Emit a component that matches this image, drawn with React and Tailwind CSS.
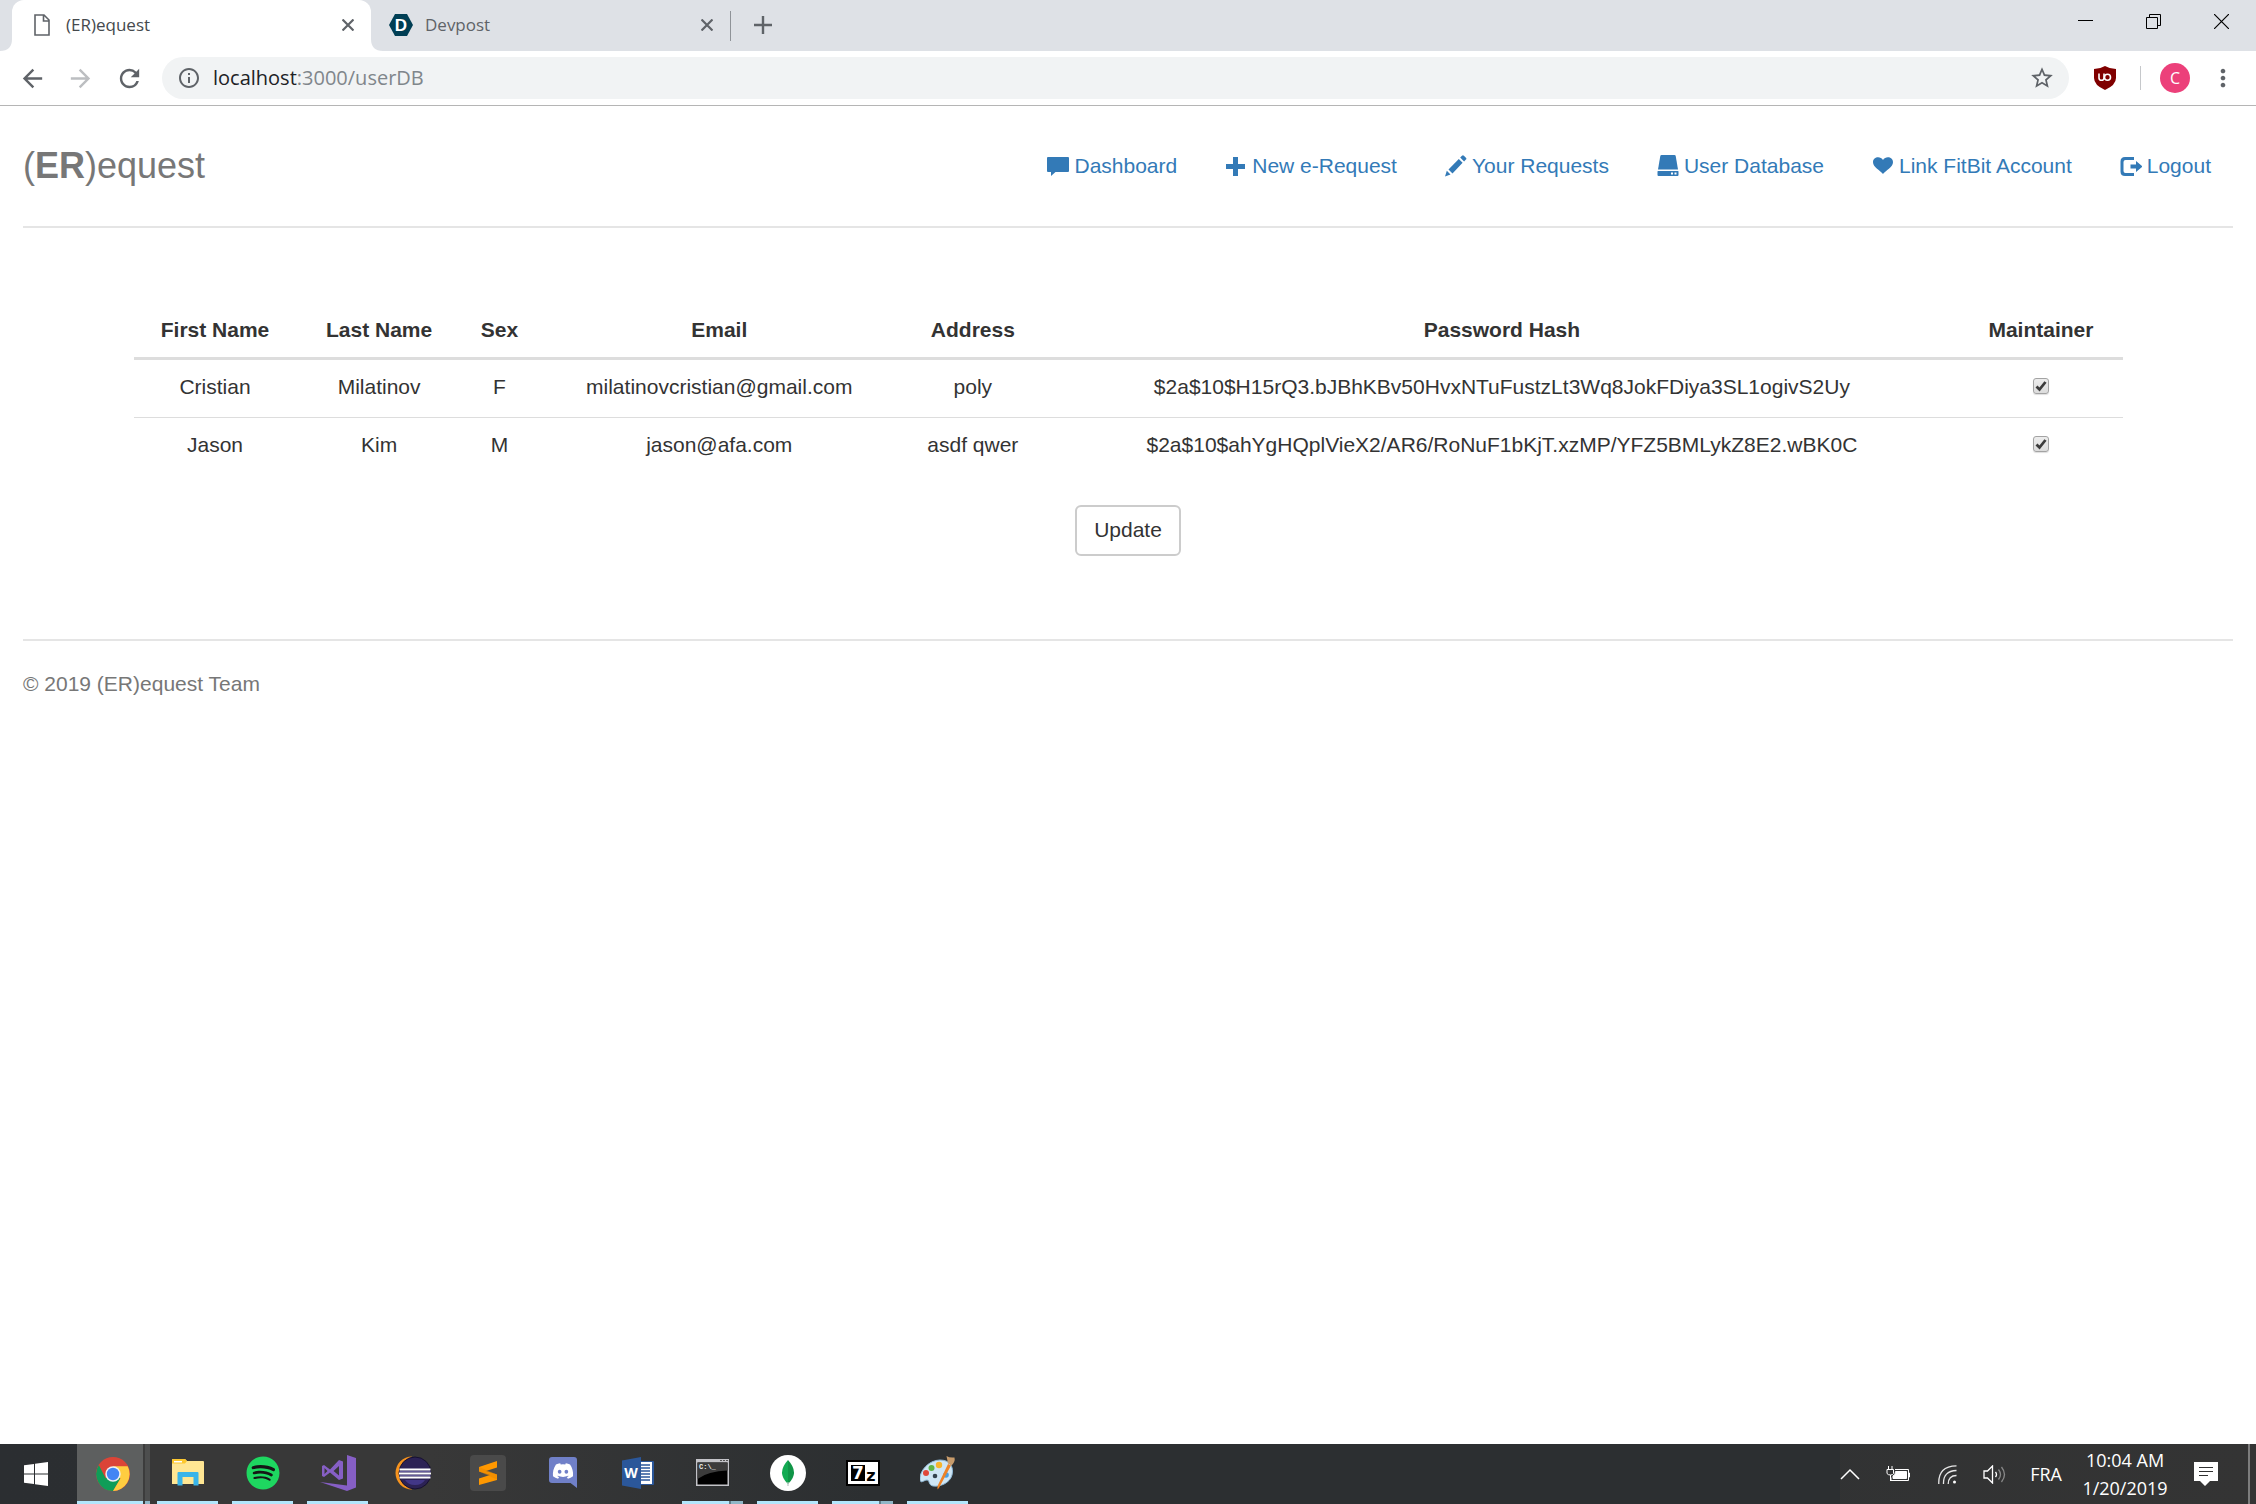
import { useState } from 'react';
import { FaDiscord, FaSpotify } from 'react-icons/fa';
import { MdArrowBack, MdArrowForward, MdInfoOutline, MdMoreVert, MdRefresh, MdStarBorder } from 'react-icons/md';

const navLinks = [
  { label: 'Dashboard', href: '#dashboard', Icon: CommentIcon },
  { label: 'New e-Request', href: '#new', Icon: PlusIcon },
  { label: 'Your Requests', href: '#requests', Icon: PencilIcon },
  { label: 'User Database', href: '#userDB', Icon: DriveIcon },
  { label: 'Link FitBit Account', href: '#fitbit', Icon: HeartIcon },
  { label: 'Logout', href: '#logout', Icon: LogoutIcon },
];

const columns = [
  { name: 'First Name', width: 'w-[8.2%]' },
  { name: 'Last Name', width: 'w-[8.3%]' },
  { name: 'Sex', width: 'w-[3.8%]' },
  { name: 'Email', width: 'w-[18.3%]' },
  { name: 'Address', width: 'w-[7.2%]' },
  { name: 'Password Hash', width: 'w-[46%]' },
  { name: 'Maintainer', width: 'w-[8.2%]' },
];

const initialUsers = [
  {
    first: 'Cristian',
    last: 'Milatinov',
    sex: 'F',
    email: 'milatinovcristian@gmail.com',
    address: 'poly',
    hash: '$2a$10$H15rQ3.bJBhKBv50HvxNTuFustzLt3Wq8JokFDiya3SL1ogivS2Uy',
    maintainer: true,
  },
  {
    first: 'Jason',
    last: 'Kim',
    sex: 'M',
    email: 'jason@afa.com',
    address: 'asdf qwer',
    hash: '$2a$10$ahYgHQplVieX2/AR6/RoNuF1bKjT.xzMP/YFZ5BMLykZ8E2.wBK0C',
    maintainer: true,
  },
];

function CommentIcon() {
  return (
    <svg viewBox="0 0 22 22" className="size-[22px]" fill="currentColor">
      <path d="M1 2h20a1 1 0 0 1 1 1v13a1 1 0 0 1-1 1H8.500L4 21V17H1a1 1 0 0 1-1-1V3a1 1 0 0 1 1-1z" />
    </svg>
  );
}

function PlusIcon() {
  return (
    <svg viewBox="0 0 22 22" className="size-[22px]" fill="currentColor">
      <path d="M8 2h5v7h7v5h-7v7H8v-7H1V9h7z" />
    </svg>
  );
}

function PencilIcon() {
  return (
    <svg viewBox="0 0 22 22" className="size-[22px]" fill="currentColor">
      <path d="M0 21.500l1.800-5.700 3.700 3.700zM3.500 14.500L13.800 4l3.800 3.800L7.500 18.500zM15.200 2.500L17 .7a1.300 1.300 0 0 1 1.900 0l2 2a1.300 1.300 0 0 1 0 1.900L19.100 6.500z" />
    </svg>
  );
}

function DriveIcon() {
  return (
    <svg viewBox="0 0 22 22" className="size-[22px]" fill="currentColor">
      <path d="M4.500 0h13q1 0 1.200 1L21 14.500H1L3.300 1Q3.500 0 4.500 0z" />
      <path fillRule="evenodd" d="M1 16h20q.5 0 .5.500v3.500q0 1-1 1h-19q-1 0-1-1v-3.500q0-.5.500-.5zM14 17.500v2h2v-2zM17.500 17.500v2h2v-2z" />
    </svg>
  );
}

function HeartIcon() {
  return (
    <svg viewBox="0 0 22 22" className="size-[22px]" fill="currentColor">
      <path d="M11 19C8.500 15.500 1 12 1 7.200 1 1.500 8.500.5 11 5 13.500.5 21 1.500 21 7.200c0 4.800-7.500 8.300-10 11.800z" />
    </svg>
  );
}

function LogoutIcon() {
  return (
    <svg viewBox="0 0 22 22" className="size-[22px]" fill="currentColor">
      <path d="M14 2v3H5.500Q3.500 5 3.500 7v9q0 2 2 2H14v3H5Q.5 21 .5 16.500v-10Q.5 2 5 2z" />
      <path d="M16 6l6.500 5.500L16 17v-3.500h-5.500v-4H16z" />
    </svg>
  );
}

function FileIcon() {
  return (
    <svg viewBox="0 0 16 22" className="h-[22px] w-4" fill="none" stroke="#5f6368" strokeWidth="1.600">
      <path d="M1 1h9l5 5v15H1zM9.500 1.500v5.500H15" />
    </svg>
  );
}

function DevpostIcon() {
  return (
    <svg viewBox="0 0 24 22" className="h-[22px] w-6">
      <path d="M6 0h12l6 11-6 11H6L0 11z" fill="#003e54" />
      <text x="12" y="17" textAnchor="middle" fontSize="17" fontWeight="700" fill="#fff" fontFamily="Liberation Sans, sans-serif">D</text>
    </svg>
  );
}

function ShieldIcon() {
  return (
    <svg viewBox="0 0 22 24" className="h-6 w-[22px]">
      <path d="M11 0q5 3 11 3v9q0 7-11 12Q0 19 0 12V3q6 0 11-3z" fill="#800000" />
      <path d="M5 7.500V12q0 2.300 2.500 2.300T10 12V7.500" fill="none" stroke="#fff" strokeWidth="1.600" />
      <circle cx="13.500" cy="11.300" r="3" fill="none" stroke="#fff" strokeWidth="1.600" />
    </svg>
  );
}

function BrowserTab({ title, icon, active }) {
  return (
    <div className={active ? 'relative flex h-full w-[359px] items-center rounded-t-xl bg-white pr-[11px] pb-px pl-[18px]' : 'flex h-full w-[359px] items-center pr-[11px] pb-px pl-[18px]'}>
      {active && (
        <>
          <svg viewBox="0 0 12 12" className="absolute bottom-0 -left-3 size-3" fill="#fff"><path d="M12 0v12H0Q12 12 12 0z" /></svg>
          <svg viewBox="0 0 12 12" className="absolute -right-3 bottom-0 size-3" fill="#fff"><path d="M0 0v12h12Q0 12 0 0z" /></svg>
        </>
      )}
      <span className="flex w-6 justify-center">{icon}</span>
      <span className={active ? 'ml-3 flex-1 text-[17px] text-[#45494d]' : 'ml-3 flex-1 text-[17px] text-[#5f6368]'}>{title}</span>
      <button aria-label={`Close ${title}`} className="flex size-6 items-center justify-center text-[#5f6368]">
        <svg viewBox="0 0 12 12" className="size-3" stroke="currentColor" strokeWidth="2.200"><path d="M.5.500l11 11M11.500.500l-11 11" /></svg>
      </button>
    </div>
  );
}

function Browser() {
  return (
    <header className="font-['Open_Sans','Noto_Sans',sans-serif]">
      <div className="flex h-[51px] items-center bg-[#dee1e6] pl-3">
        <BrowserTab title="(ER)equest" icon={<FileIcon />} active />
        <BrowserTab title="Devpost" icon={<DevpostIcon />} />
        <span className="h-[30px] w-px bg-[#8f9398]" />
        <button aria-label="New tab" className="ml-4 flex size-8 items-center justify-center pb-px text-[#5f6368]">
          <svg viewBox="0 0 18 18" className="size-[18px]" stroke="currentColor" strokeWidth="2.400"><path d="M0 9h18M9 0v18" /></svg>
        </button>
        <div className="ml-auto flex h-[42px] self-start pr-px text-black">
          <button aria-label="Minimize" className="flex w-[68px] items-center justify-center">
            <svg viewBox="0 0 15 15" className="size-[15px]"><path d="M0 6.500h15" stroke="currentColor" /></svg>
          </button>
          <button aria-label="Restore" className="flex w-[68px] items-center justify-center">
            <svg viewBox="0 0 15 15" className="size-[15px]" fill="none" stroke="currentColor"><path d="M.5 3.500h11v11H.5zM3.500 3.500v-3h11v11h-3" /></svg>
          </button>
          <button aria-label="Close window" className="flex w-[68px] items-center justify-center">
            <svg viewBox="0 0 15 15" className="size-[15px]" stroke="currentColor" strokeWidth="1.200"><path d="M0 0l15 15M15 0L0 15" /></svg>
          </button>
        </div>
      </div>

      <div className="flex h-[55px] items-center border-b border-[#b5b5b5] pr-[19px] pl-[17px] text-[#5f6368]">
        <button aria-label="Back" className="flex w-[30px] justify-center"><MdArrowBack className="size-[29px]" /></button>
        <button aria-label="Forward" className="ml-[18px] flex w-[30px] justify-center text-[#bcbec1]"><MdArrowForward className="size-[29px]" /></button>
        <button aria-label="Reload" className="ml-[19px] flex w-[30px] justify-center"><MdRefresh className="size-[29px]" /></button>
        <div className="ml-[18px] flex h-[42px] flex-1 items-center rounded-full bg-[#f1f3f4] pr-[14px] pl-[15px]">
          <MdInfoOutline className="size-6" />
          <div className="ml-3 flex-1 text-[20px] text-[#80868b]"><span className="text-[#202124]">localhost</span>:3000/userDB</div>
          <button aria-label="Bookmark this page"><MdStarBorder className="size-[26px]" /></button>
        </div>
        <button aria-label="uBlock Origin" className="ml-[25px]"><ShieldIcon /></button>
        <span className="ml-6 h-6 w-px bg-[#c6c8cb]" />
        <button aria-label="Profile" className="ml-[19px] flex size-[30px] items-center justify-center rounded-full bg-[#ec407a] text-base text-white">C</button>
        <button aria-label="Menu" className="ml-[19px]"><MdMoreVert className="size-7" /></button>
      </div>
    </header>
  );
}

function Checkbox({ label, checked, onChange }) {
  return (
    <label className="relative mx-auto mt-[6px] flex size-4">
      <input
        type="checkbox"
        aria-label={label}
        checked={checked}
        onChange={onChange}
        className="peer size-4 appearance-none rounded-[3px] border border-[#a3a3a3] bg-linear-to-b from-[#ededed] to-[#dcdcdc] shadow-[0_1px_1px_#00000022]"
      />
      <svg viewBox="0 0 16 16" className="pointer-events-none absolute inset-0 hidden peer-checked:block" fill="none" stroke="#3c3c3c" strokeWidth="2.800">
        <path d="M3.500 8.500l3 3L12.500 4" />
      </svg>
    </label>
  );
}

function UserTable() {
  const [users, setUsers] = useState(initialUsers);

  const toggle = (email) => {
    setUsers(users.map((u) => (u.email === email ? { ...u, maintainer: !u.maintainer } : u)));
  };

  return (
    <form className="mt-[75px] flex flex-col items-center" onSubmit={(e) => e.preventDefault()}>
      <table className="w-[90%] table-fixed border-separate border-spacing-0 text-center text-[21px] leading-[30px] text-[#333]">
        <thead>
          <tr>
            {columns.map((c) => <th key={c.name} className={`${c.width} border-b-[3px] border-[#ddd] py-3 font-bold`}>{c.name}</th>)}
          </tr>
        </thead>
        <tbody className="[&_td]:h-[57px] [&_td]:pt-3 [&_td]:align-top [&_tr+tr_td]:border-t [&_tr+tr_td]:border-[#ddd]">
          {users.map((u) => (
            <tr key={u.email}>
              <td>{u.first}</td>
              <td>{u.last}</td>
              <td>{u.sex}</td>
              <td>{u.email}</td>
              <td>{u.address}</td>
              <td>{u.hash}</td>
              <td><Checkbox label={`${u.first} is maintainer`} checked={u.maintainer} onChange={() => toggle(u.email)} /></td>
            </tr>
          ))}
        </tbody>
      </table>
      <button type="submit" className="mt-[31px] h-[51px] rounded-md border-2 border-[#ccc] bg-white px-[17px] pb-px text-[21px] text-[#333]">Update</button>
    </form>
  );
}

function WindowsLogo() {
  return (
    <svg viewBox="0 0 24 24" className="size-6" fill="#fff">
      <path d="M0 3.300L10 2v9.500H0zM11 1.800L24 0v11.500H11zM0 12.500h10V22L0 20.700zM11 12.500h13V24l-13-1.800z" />
    </svg>
  );
}

function ChromeLogo() {
  return (
    <svg viewBox="0 0 34 34" className="size-[34px]">
      <circle cx="17" cy="17" r="17" fill="#db4437" />
      <path d="M2.800 8A17 17 0 0 0 17 34l7.500-12.500L17 17 9.600 21.300z" fill="#0f9d58" />
      <path d="M17 34A17 17 0 0 0 31.700 9.200H17l7.400 12.300z" fill="#ffcd40" />
      <circle cx="17" cy="17" r="7.700" fill="#f1f1f1" />
      <circle cx="17" cy="17" r="6.200" fill="#4285f4" />
    </svg>
  );
}

function ExplorerLogo() {
  return (
    <svg viewBox="0 0 32 28" className="h-7 w-8">
      <path d="M0 1q0-1 1-1h12l2 2h16q1 0 1 1v22H0z" fill="#ffe693" />
      <path d="M0 1q0-1 1-1h12l2 2-2 2.500H0z" fill="#fdc82f" />
      <path d="M2 2h8v1.500H2z" fill="#fff" />
      <path d="M5.500 26.500V14q0-1 1-1h19q1 0 1 1v12.500h-5V18h-11v8.500z" fill="#39b4ea" />
    </svg>
  );
}

function SpotifyLogo() {
  return (
    <span className="flex size-[34px] rounded-full bg-[radial-gradient(#161616_60%,transparent_61%)]">
      <FaSpotify className="size-[34px] text-[#1ed760]" />
    </span>
  );
}

function VisualStudioLogo() {
  return (
    <svg viewBox="0 0 36 36" className="size-9" fill="#865fc5" fillRule="evenodd">
      <path d="M27 0l9 3v29.500L27 36 0 27l27 3.500zM2 11l2-1 6 4.500L19 5l4 1.500v17L19 25l-9-7.500L4 22l-2-1zM4.500 13v6l3-3zM19 11l-5.500 5 5.500 4.500z" />
    </svg>
  );
}

function EclipseLogo() {
  return (
    <svg viewBox="0 0 36 34" className="h-[34px] w-9">
      <path d="M17 .5A16.500 16.500 0 0 0 17 33.500L14 30Q1 18 14 3z" fill="#f7941e" />
      <circle cx="20" cy="17" r="16" fill="#2c2255" stroke="#161030" />
      <path d="M10 24h20q-3 5-10 5t-10-5z" fill="#423787" />
      <path d="M4.500 13.500h31M4 17.500h32M4.500 21.500h31" stroke="#fff" strokeWidth="2" />
      <path d="M4.500 15.500h31M4.500 19.500h31" stroke="#655c9a" strokeWidth="1" />
    </svg>
  );
}

function SublimeLogo() {
  return (
    <span className="flex size-9 items-center justify-center rounded-sm bg-[#4a4a4a]">
      <svg viewBox="0 0 18 24" className="h-6 w-[18px]" fill="#ff9800">
        <path d="M0 6l18-6v6.500L7 10l11 3.500V19L0 24v-6.500L11 14 0 10.500z" />
        <path d="M0 10.500V6l18 7.500v5z" fill="#e88600" opacity=".5" />
      </svg>
    </span>
  );
}

function DiscordLogo() {
  return (
    <span className="relative flex">
      <svg viewBox="0 0 28 31" className="h-[31px] w-7" fill="#7080c8">
        <path d="M3 0h22q3 0 3 3v28l-6.500-5H3q-3 0-3-3V3q0-3 3-3z" />
      </svg>
      <FaDiscord className="absolute top-[3px] left-[3px] size-[22px] text-white" />
    </span>
  );
}

function WordLogo() {
  return (
    <svg viewBox="0 0 32 32" className="size-8">
      <path d="M16 4h15q1 0 1 1v22q0 1-1 1H16z" fill="#2b579a" />
      <path d="M18 5h12v22H18z" fill="#fff" />
      <path d="M18 8h10M18 11h10M18 14h10M18 17h10M18 20h10M18 23h10" stroke="#2b579a" strokeWidth="1.300" />
      <path d="M0 3.500L19 0v32L0 28.500z" fill="#2b579a" />
      <text x="9" y="21" textAnchor="middle" fontSize="14" fontWeight="700" fill="#fff" fontFamily="Open Sans, sans-serif">W</text>
    </svg>
  );
}

function TerminalLogo() {
  return (
    <svg viewBox="0 0 33 27" className="h-[27px] w-[33px]">
      <path d="M0 0h33v27H0z" fill="#c3c3c8" />
      <path d="M1.500 3.500h30v22h-30z" fill="#000" />
      <path d="M1.500 3.500h30v8Q12 12 1.500 20z" fill="#3b3b3b" />
      <path d="M24 1.500h2M27 1.500h2M30 1.500h2" stroke="#555" />
      <text x="3" y="10" fontSize="7" fontWeight="700" fill="#eee" fontFamily="Liberation Mono, monospace">C:\_</text>
    </svg>
  );
}

function MongoLogo() {
  return (
    <svg viewBox="0 0 36 36" className="size-9">
      <circle cx="18" cy="18" r="18" fill="#fff" />
      <path d="M18 5q-12 13 0 24z" fill="#13aa52" />
      <path d="M18 5q12 13 0 24z" fill="#109547" />
      <path d="M18 27v4" stroke="#b8c4c2" strokeWidth="1.200" />
    </svg>
  );
}

function SevenZipLogo() {
  return (
    <svg viewBox="0 0 34 26" className="h-[26px] w-[34px]">
      <path d="M0 0h34v26H0z" fill="#000" />
      <path d="M2 2h30v22H2z" fill="#fff" />
      <path d="M5 5h14v16H5z" fill="#000" />
      <text x="12" y="19" textAnchor="middle" fontSize="17" fontWeight="700" fill="#fff" fontFamily="DejaVu Sans, sans-serif">7</text>
      <text x="25" y="21" textAnchor="middle" fontSize="16" fontWeight="700" fill="#000" fontFamily="DejaVu Sans, sans-serif">z</text>
    </svg>
  );
}

function PaintLogo() {
  return (
    <svg viewBox="0 0 36 36" className="size-9">
      <path d="M20 5C30 5 34 12 32 20S20 32 13 31c-5-1-3-6-6-6-3 0-6 4-7 0C-1 16 9 5 20 5z" fill="#cfe6f5" stroke="#8fb9d6" />
      <circle cx="15" cy="21" r="2.300" fill="#34434f" />
      <circle cx="6" cy="18" r="3" fill="#e0473a" />
      <circle cx="11.500" cy="13" r="3" fill="#5fb548" />
      <circle cx="19" cy="10" r="3.200" fill="#f7b52c" />
      <circle cx="26" cy="20" r="2.800" fill="#4b9fe0" />
      <path d="M28 9l3 1.500L20 31q-1 2.500-2.500 3.500-.5-2 .5-4.500z" fill="#ee8327" />
      <path d="M26.500 1q3 2 8 1.500 1 4-3 8l-3.500-2z" fill="#c79b6b" />
    </svg>
  );
}

const taskbarApps = [
  { name: 'File Explorer', Logo: ExplorerLogo, running: true },
  { name: 'Spotify', Logo: SpotifyLogo, running: true },
  { name: 'Visual Studio', Logo: VisualStudioLogo, running: true },
  { name: 'Eclipse', Logo: EclipseLogo },
  { name: 'Sublime Text', Logo: SublimeLogo },
  { name: 'Discord', Logo: DiscordLogo },
  { name: 'Word', Logo: WordLogo },
  { name: 'Command Prompt', Logo: TerminalLogo, running: true, stacked: true },
  { name: 'MongoDB Compass', Logo: MongoLogo, running: true },
  { name: '7-Zip', Logo: SevenZipLogo, running: true, stacked: true },
  { name: 'Paint', Logo: PaintLogo, running: true },
];

function TaskbarApp({ name, Logo, running, stacked }) {
  return (
    <button aria-label={name} className="flex h-full w-[75px] flex-col items-center">
      <span className="flex flex-1 items-center"><Logo /></span>
      <span className="flex h-[3px] w-[61px]">
        {running && <span className="flex-1 bg-[#b2e6fc]" />}
        {stacked && <span className="w-[14px] border-l-2 border-[#5f7c88] bg-[#8fb6c7]" />}
      </span>
    </button>
  );
}

function Taskbar() {
  return (
    <footer className="flex h-[60px] items-center bg-linear-to-r from-[#2b2e31] via-[#2d3032] to-[#343434] font-['Open_Sans','Noto_Sans',sans-serif] text-white">
      <button aria-label="Start" className="flex h-full w-[77px] items-center pl-6"><WindowsLogo /></button>
      <div className="flex h-full flex-1 bg-linear-to-r from-[#383838] from-20% to-[#2c2f31] to-45%">
        <button aria-label="Google Chrome" className="flex h-full w-[73px]">
          <span className="flex h-full w-[66px] flex-col bg-[#5d5f5f]">
            <span className="flex flex-1 items-center pt-[3px] pl-[19px]"><ChromeLogo /></span>
            <span className="h-[3px] bg-[#b2e6fc]" />
          </span>
          <span className="flex h-full w-[7px] flex-col justify-end border-l-2 border-[#3c3c3c] bg-[#4d4e4e]"><span className="h-[3px] bg-[#8fb6c7]" /></span>
        </button>
        {taskbarApps.map((app) => <TaskbarApp key={app.name} {...app} />)}
      </div>
      <button aria-label="Show hidden icons" className="mr-[26px]">
        <svg viewBox="0 0 20 12" className="h-3 w-5" fill="none" stroke="#fff" strokeWidth="1.500"><path d="M1 11l9-9 9 9" /></svg>
      </button>
      <svg viewBox="0 0 24 17" className="mr-7 h-[17px] w-6" fill="none" stroke="#fff">
        <path d="M9 3.500h13.500v11H5v-3M22.500 7h1v4h-1M1 3.500h6.500v4Q7 9 4.500 9T1 7.500zM2.500 3V0M6 3V0M4.500 9v6" />
        <path d="M9.500 5.500h11v7H7V10q2.500-1 2.500-4.500z" fill="#fff" />
      </svg>
      <svg viewBox="0 0 19 19" className="mr-[26px] size-[19px]" fill="none" stroke="#e8e8e8" strokeWidth="1.300">
        <path d="M.8 19Q0 1 18.500.8M5.500 19Q5 6 18.500 5.500M10.200 19q0-8.500 8.300-8.500" />
        <circle cx="16.500" cy="17" r="1.500" fill="#fff" stroke="none" />
      </svg>
      <svg viewBox="0 0 23 19" className="mr-6 h-[19px] w-[23px]" fill="none" stroke="#fff" strokeWidth="1.300">
        <path d="M1 6h3.500L9.500 1v17l-5-5H1zM12.500 7q2 2.500 0 5" />
        <path d="M15.500 4.500q4 5 0 10M18.500 2q6 7.500 0 15" stroke="#888" />
      </svg>
      <span className="text-[18px]">FRA</span>
      <div className="ml-[21px] flex w-[84px] flex-col items-center text-[18px] leading-7 whitespace-nowrap">
        <span>10:04 AM</span>
        <span>1/20/2019</span>
      </div>
      <button aria-label="Notifications" className="ml-[27px]">
        <svg viewBox="0 0 24 24" className="size-6">
          <path d="M0 0h24v19h-8l-5 5-5-5H0z" fill="#fff" />
          <path d="M5 5.500h14M5 9.500h14M5 13.500h9" stroke="#303030" />
        </svg>
      </button>
      <span className="mr-[6px] ml-[30px] h-full w-[2px] bg-[#7d7d7d]" />
    </footer>
  );
}

export default function App() {
  return (
    <div className="flex min-h-screen flex-col bg-white">
      <Browser />
      <main className="flex-1 px-[23px] pt-[35px] font-['Liberation_Sans',Arial,sans-serif]">
        <div className="flex items-center justify-between border-b-2 border-[#e5e5e5] pb-[35px]">
          <h1 className="text-4xl leading-[50px] text-[#777]">(<b>ER</b>)equest</h1>
          <nav className="flex gap-12 pr-[22px]">
            {navLinks.map(({ label, href, Icon }) => (
              <a key={label} href={href} className="flex items-center gap-[5px] text-[21px] leading-[30px] text-[#337ab7]">
                <Icon />
                {label}
              </a>
            ))}
          </nav>
        </div>
        <UserTable />
        <p className="mt-[83px] border-t-2 border-[#e5e5e5] pt-7 text-[21px] leading-[30px] text-[#777]">© 2019 (ER)equest Team</p>
      </main>
      <Taskbar />
    </div>
  );
}
